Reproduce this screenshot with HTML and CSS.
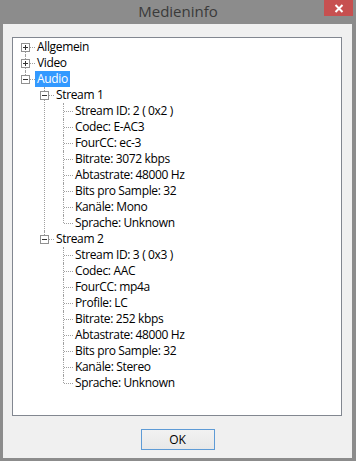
FILE: index.html
```html
<!DOCTYPE html>
<html lang="de">
<head>
    <meta charset="UTF-8">
    <meta name="viewport" content="width=device-width, initial-scale=1.0">
    <title>Medieninfo</title>
    <link rel="stylesheet" href="styles.css">
</head>
<body>
    <div class="window">
        <div class="titlebar">
            <span class="title">Medieninfo</span>
            <button class="close" type="button" aria-label="Schließen">
                <svg width="10" height="9" viewBox="0 0 10 9"><path d="M1.5 1l7 7M8.5 1l-7 7" stroke="#fff" stroke-width="2"/></svg>
            </button>
        </div>
        <div class="client">
            <div class="treebox">
                <ul class="tree">
                    <li>
                        <div class="node"><span class="btn"><svg width="9" height="9" viewBox="0 0 9 9"><rect x=".5" y=".5" width="8" height="8" fill="#fff" stroke="#919191"/><path d="M2 4.5h5M4.5 2v5" stroke="#333"/></svg></span><span class="label">Allgemein</span></div>
                    </li>
                    <li>
                        <div class="node"><span class="btn"><svg width="9" height="9" viewBox="0 0 9 9"><rect x=".5" y=".5" width="8" height="8" fill="#fff" stroke="#919191"/><path d="M2 4.5h5M4.5 2v5" stroke="#333"/></svg></span><span class="label">Video</span></div>
                    </li>
                    <li>
                        <div class="node"><span class="btn"><svg width="9" height="9" viewBox="0 0 9 9"><rect x=".5" y=".5" width="8" height="8" fill="#fff" stroke="#919191"/><path d="M2 4.5h5" stroke="#333"/></svg></span><span class="label selected">Audio</span></div>
                        <ul>
                            <li>
                                <div class="node"><span class="btn"><svg width="9" height="9" viewBox="0 0 9 9"><rect x=".5" y=".5" width="8" height="8" fill="#fff" stroke="#919191"/><path d="M2 4.5h5" stroke="#333"/></svg></span><span class="label">Stream 1</span></div>
                                <ul>
                                    <li><div class="node"><span class="btn"></span><span class="label">Stream ID: 2 ( 0x2 )</span></div></li>
                                    <li><div class="node"><span class="btn"></span><span class="label">Codec: E-AC3</span></div></li>
                                    <li><div class="node"><span class="btn"></span><span class="label">FourCC: ec-3</span></div></li>
                                    <li><div class="node"><span class="btn"></span><span class="label">Bitrate: 3072 kbps</span></div></li>
                                    <li><div class="node"><span class="btn"></span><span class="label">Abtastrate: 48000 Hz</span></div></li>
                                    <li><div class="node"><span class="btn"></span><span class="label">Bits pro Sample: 32</span></div></li>
                                    <li><div class="node"><span class="btn"></span><span class="label">Kanäle: Mono</span></div></li>
                                    <li><div class="node"><span class="btn"></span><span class="label">Sprache: Unknown</span></div></li>
                                </ul>
                            </li>
                            <li>
                                <div class="node"><span class="btn"><svg width="9" height="9" viewBox="0 0 9 9"><rect x=".5" y=".5" width="8" height="8" fill="#fff" stroke="#919191"/><path d="M2 4.5h5" stroke="#333"/></svg></span><span class="label">Stream 2</span></div>
                                <ul>
                                    <li><div class="node"><span class="btn"></span><span class="label">Stream ID: 3 ( 0x3 )</span></div></li>
                                    <li><div class="node"><span class="btn"></span><span class="label">Codec: AAC</span></div></li>
                                    <li><div class="node"><span class="btn"></span><span class="label">FourCC: mp4a</span></div></li>
                                    <li><div class="node"><span class="btn"></span><span class="label">Profile: LC</span></div></li>
                                    <li><div class="node"><span class="btn"></span><span class="label">Bitrate: 252 kbps</span></div></li>
                                    <li><div class="node"><span class="btn"></span><span class="label">Abtastrate: 48000 Hz</span></div></li>
                                    <li><div class="node"><span class="btn"></span><span class="label">Bits pro Sample: 32</span></div></li>
                                    <li><div class="node"><span class="btn"></span><span class="label">Kanäle: Stereo</span></div></li>
                                    <li><div class="node"><span class="btn"></span><span class="label">Sprache: Unknown</span></div></li>
                                </ul>
                            </li>
                        </ul>
                    </li>
                </ul>
            </div>
            <div class="footer">
                <button class="ok" type="button">OK</button>
            </div>
        </div>
    </div>
</body>
</html>
```

FILE: styles.css
```css
body {
    margin: 0;
    background-color: #8c8c8c;
    font-family: "Open Sans", "Noto Sans", sans-serif;
}
.window {
    width: 356px;
    height: 461px;
    display: flex;
    flex-direction: column;
}
.titlebar {
    height: 24px;
    display: grid;
    grid-template-columns: 1fr auto 1fr;
}
.title {
    grid-column: 2;
    font-size: 15px;
    line-height: 22px;
    color: #3a3a3a;
}
.close {
    grid-column: 3;
    justify-self: end;
    align-self: start;
    width: 29px;
    height: 16px;
    margin-right: 3px;
    padding: 0;
    border: none;
    background-color: #c75050;
    display: flex;
    align-items: center;
    justify-content: center;
}
.client {
    flex: 1;
    margin: 0 4px 3px 3px;
    background-color: #f0f0f0;
    display: flex;
    flex-direction: column;
}
.treebox {
    height: 379px;
    margin: 13px 10px 0 9px;
    box-sizing: border-box;
    border: 1px solid #828790;
    background-color: #fff;
    padding: 1px 0 0 3px;
    overflow: hidden;
}
.tree, .tree ul {
    list-style: none;
    margin: 0;
    padding: 0;
}
.tree ul {
    margin-left: 19px;
}
.tree li {
    position: relative;
}
.tree li::before {
    content: "";
    position: absolute;
    left: 9px;
    top: 0;
    bottom: 0;
    border-left: 1px dotted #a0a0a0;
}
.tree > li:first-child::before {
    top: 8px;
}
.tree li:last-child::before {
    bottom: auto;
    height: 8px;
}
.tree > li:first-child:last-child::before {
    height: 0;
}
.node {
    position: relative;
    display: flex;
    align-items: center;
    height: 16px;
}
.node::before {
    content: "";
    position: absolute;
    left: 10px;
    top: 8px;
    width: 9px;
    border-top: 1px dotted #a0a0a0;
}
.btn {
    position: relative;
    z-index: 1;
    width: 19px;
    height: 16px;
    display: flex;
    align-items: center;
    justify-content: center;
}
.btn svg {
    display: block;
}
.label {
    padding: 0 2px;
    font-size: 12px;
    line-height: 16px;
    letter-spacing: -0.35px;
    color: #000;
    white-space: nowrap;
}
.label.selected {
    background-color: #3399ff;
    color: #fff;
}
.footer {
    display: flex;
    justify-content: center;
    padding-top: 13px;
}
.ok {
    width: 74px;
    height: 21px;
    padding: 0;
    border: 1px solid #5e9bd6;
    background: linear-gradient(#f2f2f2, #e8e8e8);
    font-family: "Open Sans", "Noto Sans", sans-serif;
    font-size: 12px;
    color: #000;
}
```
